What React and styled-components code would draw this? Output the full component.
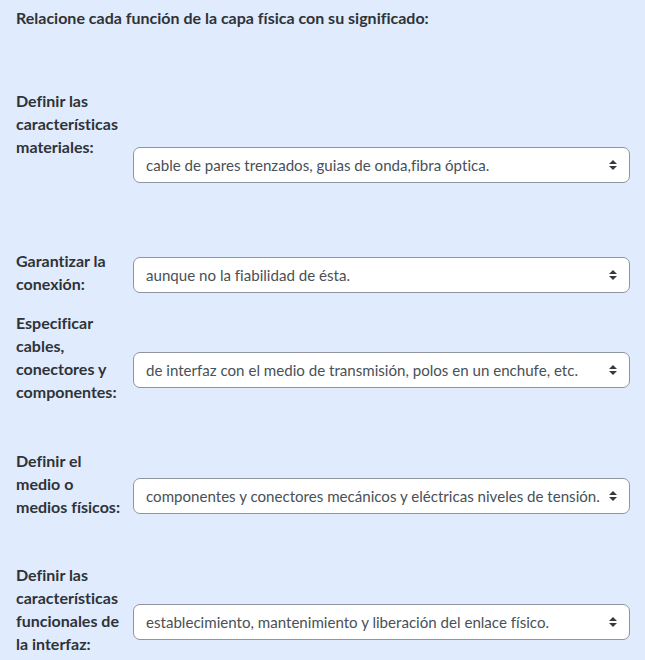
import React from "react";
import styled, { createGlobalStyle } from "styled-components";

const GlobalStyle = createGlobalStyle`
  html, body { margin: 0; padding: 0; background: #e0ebfd; }
  * { box-sizing: border-box; }
`;

const Page = styled.div`
  min-height: 660px;
  background: #e0ebfd;
  padding: 5.7px 15px 0 16px;
  font-family: Lato, "Open Sans", sans-serif;
  font-variant-ligatures: none;
  font-feature-settings: "liga" 0, "clig" 0;
  color: #2f3337;
`;

const Title = styled.h4`
  margin: 0;
  font-size: 16px;
  line-height: 23px;
  font-weight: 700;
`;

const Row = styled.div`
  display: flex;
  align-items: flex-start;
  margin-top: ${(p) => p.$gap}px;
`;

const Label = styled.div`
  flex: 0 0 117px;
  font-size: 16px;
  line-height: 23px;
  font-weight: 700;
  white-space: nowrap;
`;

const SelectBox = styled.div`
  flex: 1;
  margin-top: ${(p) => p.$offset}px;
  height: 36px;
  display: flex;
  align-items: center;
  justify-content: space-between;
  padding: 0 12px;
  background: #fff;
  border: 1px solid #8f959e;
  border-radius: 7px;
  font-size: 15.1px;
  color: #495057;
  white-space: nowrap;
  overflow: hidden;
`;

const Value = styled.span`
  overflow: hidden;
`;

const Arrows = () => (
  <svg width="8" height="10" viewBox="0 0 4 5" style={{ flex: "none", marginLeft: 8 }}>
    <path d="M2 0L0 2h4zm0 5L0 3h4z" fill="#343a40" />
  </svg>
);

const rows = [
  { gap: 60, offset: 58.5, lines: ["Definir las", "características", "materiales:"], value: "cable de pares trenzados, guias de onda,fibra óptica." },
  { gap: 66, offset: 8, lines: ["Garantizar la", "conexión:"], value: "aunque no la fiabilidad de ésta." },
  { gap: 16, offset: 41, lines: ["Especificar", "cables,", "conectores y", "componentes:"], value: "de interfaz con el medio de transmisión, polos en un enchufe, etc." },
  { gap: 45.5, offset: 29.5, lines: ["Definir el", "medio o", "medios físicos:"], value: "componentes y conectores mecánicos y eléctricas niveles de tensión." },
  { gap: 45.5, offset: 41, lines: ["Definir las", "características", "funcionales de", "la interfaz:"], value: "establecimiento, mantenimiento y liberación del enlace físico." },
];

export default function App() {
  return (
    <Page>
      <GlobalStyle />
      <Title>Relacione cada función de la capa física con su significado:</Title>
      {rows.map((r, i) => (
        <Row key={i} $gap={r.gap}>
          <Label>
            {r.lines.map((l, j) => (
              <React.Fragment key={j}>
                {l}
                {j < r.lines.length - 1 && <br />}
              </React.Fragment>
            ))}
          </Label>
          <SelectBox $offset={r.offset} role="combobox">
            <Value>{r.value}</Value>
            <Arrows />
          </SelectBox>
        </Row>
      ))}
    </Page>
  );
}
